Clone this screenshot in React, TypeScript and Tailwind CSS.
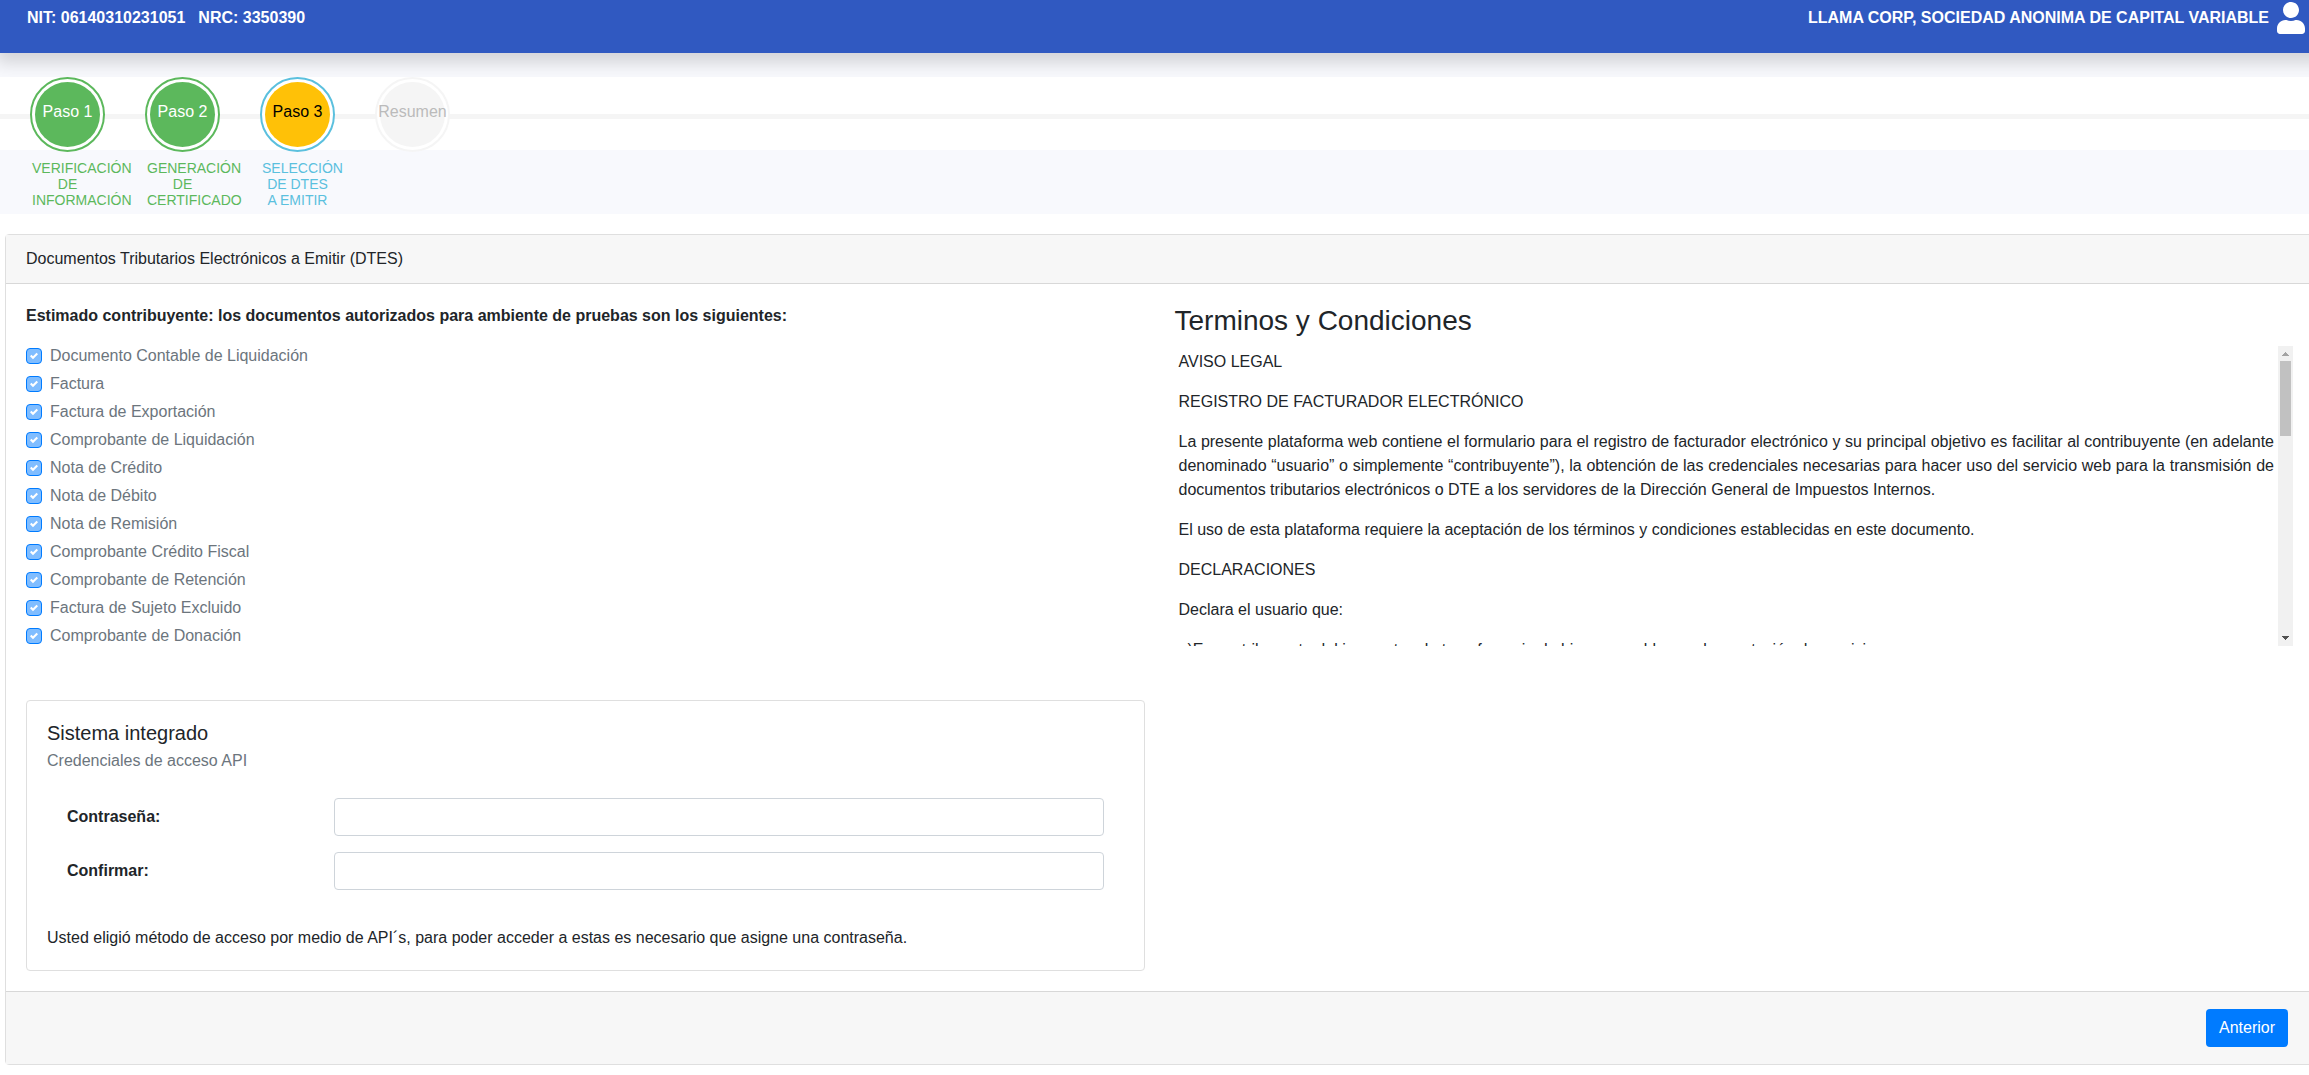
import React, { useState } from 'react';
import { FaUser } from 'react-icons/fa';

interface Step {
    name: string;
    label?: string;
    ring: string;
    fill: string;
    text: string;
}

const steps: Step[] = [
    { name: 'Paso 1', label: 'VERIFICACIÓN DE INFORMACIÓN', ring: 'border-[#5cb85c]', fill: 'bg-[#5cb85c] text-white', text: 'text-[#5cb85c]' },
    { name: 'Paso 2', label: 'GENERACIÓN DE CERTIFICADO', ring: 'border-[#5cb85c]', fill: 'bg-[#5cb85c] text-white', text: 'text-[#5cb85c]' },
    { name: 'Paso 3', label: 'SELECCIÓN DE DTES A EMITIR', ring: 'border-[#5bc0de]', fill: 'bg-[#ffc107] text-black', text: 'text-[#5bc0de]' },
    { name: 'Resumen', ring: 'border-[#f5f5f5]', fill: 'bg-[#f5f5f5] text-[#bbbbbb]', text: 'text-[#bbbbbb]' },
];

const documents = [
    'Documento Contable de Liquidación',
    'Factura',
    'Factura de Exportación',
    'Comprobante de Liquidación',
    'Nota de Crédito',
    'Nota de Débito',
    'Nota de Remisión',
    'Comprobante Crédito Fiscal',
    'Comprobante de Retención',
    'Factura de Sujeto Excluido',
    'Comprobante de Donación',
];

const terms = [
    'AVISO LEGAL',
    'REGISTRO DE FACTURADOR ELECTRÓNICO',
    'La presente plataforma web contiene el formulario para el registro de facturador electrónico y su principal objetivo es facilitar al contribuyente (en adelante denominado “usuario” o simplemente “contribuyente”), la obtención de las credenciales necesarias para hacer uso del servicio web para la transmisión de documentos tributarios electrónicos o DTE a los servidores de la Dirección General de Impuestos Internos.',
    'El uso de esta plataforma requiere la aceptación de los términos y condiciones establecidas en este documento.',
    'DECLARACIONES',
    'Declara el usuario que:',
    'a)Es contribuyente del impuesto a la transferencia de bienes muebles y a la prestación de servicios.',
];

const StepItem: React.FC<{ step: Step }> = ({ step }) => (
    <li className="w-[75px]">
        <div className={`size-[75px] rounded-full border-2 bg-white p-[3px] ${step.ring}`}>
            <div className={`flex size-full justify-center rounded-full pt-[18px] ${step.fill}`}>
                <span>{step.name}</span>
            </div>
        </div>
        {step.label && (
            <p className={`mx-[2px] mt-2 text-center text-[14px] leading-4 ${step.text}`}>{step.label}</p>
        )}
    </li>
);

const DocumentCheckbox: React.FC<{ label: string }> = ({ label }) => (
    <label className="flex h-6 w-fit items-center gap-2 text-[#6c757d]">
        <span className="grid size-4 place-items-center">
            <input
                type="checkbox"
                checked
                disabled
                readOnly
                className="col-start-1 row-start-1 size-4 appearance-none rounded border border-[#007bff] bg-[#80bdff]"
            />
            <svg viewBox="0 0 8 8" className="col-start-1 row-start-1 size-2 fill-white">
                <path d="M6.564.75l-3.59 3.612-1.538-1.55L0 4.26 2.974 7.25 8 2.193z" />
            </svg>
        </span>
        {label}
    </label>
);

const TermsBox: React.FC = () => {
    // share of the scrollable distance, 0 to 1
    const [progress, setProgress] = useState(0);

    const handleScroll = (e: React.UIEvent<HTMLDivElement>) => {
        const el = e.currentTarget;
        setProgress(el.scrollTop / (el.scrollHeight - el.clientHeight));
    };

    return (
        <div className="flex h-[300px]">
            <div onScroll={handleScroll} className="flex-1 overflow-y-scroll p-1 text-justify [scrollbar-width:none]">
                <div className="flex min-h-[1072px] flex-col gap-4">
                    {terms.map(paragraph => (
                        <p key={paragraph}>{paragraph}</p>
                    ))}
                </div>
            </div>
            <div aria-hidden="true" className="flex w-[15px] flex-col items-center bg-[#f1f1f1]">
                <svg viewBox="0 0 15 15" className="size-[15px] fill-[#a3a3a3]">
                    <path d="M4 10h7v-1h-1v-1h-1v-1h-1v-1h-1v1h-1v1h-1v1h-1z" />
                </svg>
                <div className="w-[11px] flex-1">
                    <div className="h-[75px] bg-[#c1c1c1]" style={{ marginTop: progress * 195 }} />
                </div>
                <svg viewBox="0 0 15 15" className="size-[15px] fill-[#505050]">
                    <path d="M4 5h7v1h-1v1h-1v1h-1v1h-1v-1h-1v-1h-1v-1h-1z" />
                </svg>
            </div>
        </div>
    );
};

const App: React.FC = () => {
    const [password, setPassword] = useState('');
    const [confirm, setConfirm] = useState('');

    return (
        <div className="overflow-x-hidden bg-white pb-2 font-['Liberation_Sans',Arial,sans-serif] text-base text-[#212529]">
            <div className="bg-[#f8f9fd]">
                <header className="-mr-8 mb-6 flex h-[53px] items-start justify-between bg-[#3059c1] pr-9 pl-[27px] font-bold text-white shadow-[0_6px_16px_4px_rgba(0,0,0,0.15)]">
                    <div className="flex gap-[13px] pt-[6px]">
                        <span>NIT: 06140310231051</span>
                        <span>NRC: 3350390</span>
                    </div>
                    <div className="flex gap-2">
                        <span className="pt-[6px]">LLAMA CORP, SOCIEDAD ANONIMA DE CAPITAL VARIABLE</span>
                        <FaUser className="mt-[2px] h-8 w-7" />
                    </div>
                </header>

                <nav aria-label="Pasos" className="relative pb-[6px]">
                    <div className="absolute inset-x-0 top-0 h-[73px] bg-white pt-[37px]">
                        <div className="h-[5px] bg-[#f5f5f5]" />
                    </div>
                    <ol className="relative flex gap-10 pl-[30px]">
                        {steps.map(step => (
                            <StepItem key={step.name} step={step} />
                        ))}
                    </ol>
                </nav>
            </div>

            <main className="mt-5 -mr-[5px] ml-[5px] rounded border border-[#dfdfdf]">
                <div className="border-b border-[#d8d8d8] bg-[#f7f7f7] px-5 py-3">
                    Documentos Tributarios Electrónicos a Emitir (DTES)
                </div>

                <div className="grid grid-cols-2 gap-x-[30px] p-5">
                    <section>
                        <p className="mb-4 font-bold">
                            Estimado contribuyente: los documentos autorizados para ambiente de pruebas son los siguientes:
                        </p>
                        <div className="flex flex-col gap-1">
                            {documents.map(doc => (
                                <DocumentCheckbox key={doc} label={doc} />
                            ))}
                        </div>

                        <div className="mt-[52px] rounded border border-[#dfdfdf] p-5">
                            <h5 className="mb-[6px] text-xl leading-6">Sistema integrado</h5>
                            <h6 className="mb-7 leading-[19px] text-[#6c757d]">Credenciales de acceso API</h6>
                            <form className="grid grid-cols-4 items-center gap-x-[30px] gap-y-4 px-5">
                                <label htmlFor="password" className="font-bold">Contraseña:</label>
                                <input
                                    id="password"
                                    type="password"
                                    value={password}
                                    onChange={(e) => setPassword(e.target.value)}
                                    className="col-span-3 h-[38px] rounded border border-[#ced4da] px-3 outline-none focus:border-[#80bdff]"
                                />
                                <label htmlFor="confirm" className="font-bold">Confirmar:</label>
                                <input
                                    id="confirm"
                                    type="password"
                                    value={confirm}
                                    onChange={(e) => setConfirm(e.target.value)}
                                    className="col-span-3 h-[38px] rounded border border-[#ced4da] px-3 outline-none focus:border-[#80bdff]"
                                />
                            </form>
                            <p className="mt-9">
                                Usted eligió método de acceso por medio de API´s, para poder acceder a estas es necesario que asigne una contraseña.
                            </p>
                        </div>
                    </section>

                    <section>
                        <h3 className="mb-2 text-[28px] leading-[34px]">Terminos y Condiciones</h3>
                        <TermsBox />
                    </section>
                </div>

                <div className="flex justify-end border-t border-[#d8d8d8] bg-[#f7f7f7] px-5 py-3">
                    <button type="button" className="m-[5px] h-[38px] rounded bg-[#007bff] px-[13px] text-white">
                        Anterior
                    </button>
                </div>
            </main>
        </div>
    );
};

export default App;
